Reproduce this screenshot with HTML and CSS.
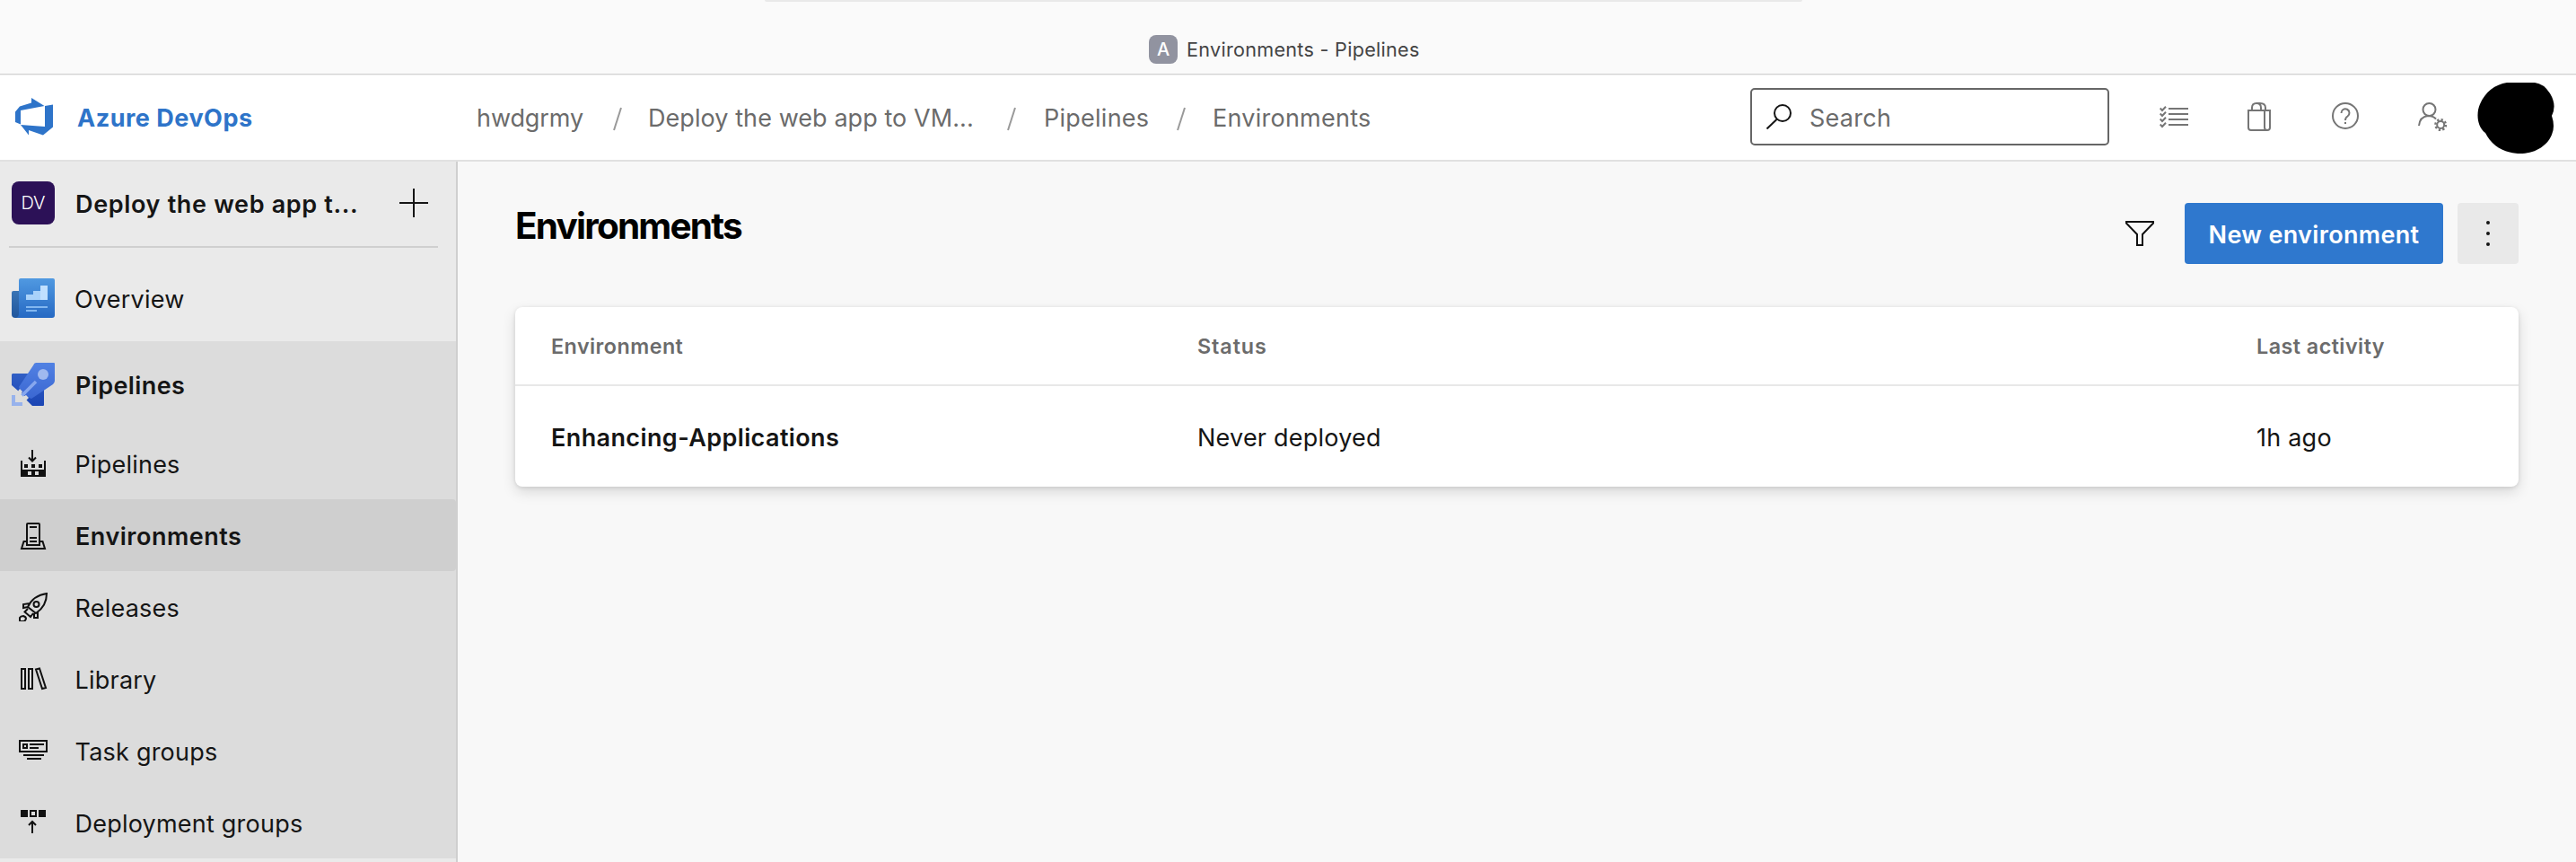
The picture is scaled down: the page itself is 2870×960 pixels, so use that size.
FILE: index.html
```html
<!DOCTYPE html>
<html lang="en">
<head>
<meta charset="utf-8">
<title>Environments - Pipelines</title>
<link rel="stylesheet" href="styles.css">
</head>
<body>
<div class="tabbar">
  <div class="tab-edge"></div>
  <span class="favicon">A</span><span class="tab-title">Environments - Pipelines</span>
</div>
<header class="header">
  <a class="brand">
    <svg class="logo" viewBox="0 0 42 42"><path fill="#2e74c9" d="M0 15.500 5 9.500 18 5.500V0L32.500 9 6 14V29.500L0 27ZM33 9 42 7.500V32.500L31 41.500 15 36V41.500L6 30 33 32Z"/></svg>
    <span class="brand-name">Azure DevOps</span>
  </a>
  <nav class="crumbs">
    <span class="crumb c1">hwdgrmy</span><svg class="slash s1" viewBox="0 0 10 28"><path d="M9 1 1 26"/></svg>
    <span class="crumb c2">Deploy the web app to VM...</span><svg class="slash s2" viewBox="0 0 10 28"><path d="M9 1 1 26"/></svg>
    <span class="crumb c3">Pipelines</span><svg class="slash s3" viewBox="0 0 10 28"><path d="M9 1 1 26"/></svg>
    <span class="crumb c4">Environments</span>
  </nav>
  <div class="search">
    <svg viewBox="0 0 28 28" class="search-icon"><circle cx="18" cy="10" r="9"/><path d="M12 16.500.500 27.500"/></svg>
    <span class="placeholder">Search</span>
  </div>
  <div class="tools">
    <svg class="tool" viewBox="0 0 32 32"><path d="M10 7H32M10 13H32M10 19H32M10 25H32"/><path d="M.700 6.500 3 9 7 4.700M.700 12.500 3 15 7 10.700M.700 18.500 3 21 7 16.700M.700 24.500 3 27 7 22.700"/></svg>
    <svg class="tool" viewBox="2 0 32 32"><path d="M5 9H29V28Q29 31 26 31H8Q5 31 5 28ZM23 9V28Q23 31 26 31M9 9V6Q9 1 14 1T19 6V9M14 1H18Q24 1 24 6V9"/></svg>
    <svg class="tool" viewBox="1 0 32 32"><circle cx="16" cy="15" r="14"/><path d="M11.500 12A4.500 4.500 0 1 1 18.500 15.500Q16 17 16 20"/><path d="M16 22V24"/></svg>
    <svg class="tool" viewBox="0 0 32 32"><circle cx="12.500" cy="8" r="7"/><path d="M1 26Q2 16 11 15 17 15 20 18.500"/><circle cx="25.200" cy="25" r="4"/><path stroke-dasharray="2.300 2.200" stroke-width="2.400" d="M31 25A5.800 5.800 0 1 1 19.400 25 5.800 5.800 0 1 1 31 25"/></svg>
  </div>
  <svg class="avatar" viewBox="0 0 86 80"><path d="M33 0H64Q74 1 81 12 89 25 83 37 87 49 83 58C77 73 60 80 45 79 29 78 16 70 9 56-1 48-1 33 3 24 9 10 20 2 33 0Z"/></svg>
</header>
<div class="body">
  <aside class="sidebar">
    <div class="project">
      <span class="badge">DV</span>
      <span class="label bold project-name">Deploy the web app t...</span>
      <svg class="plus" viewBox="0 0 32 32"><path d="M16 0V32M0 16H32"/></svg>
    </div>
    <div class="divider"></div>
    <a class="hub">
      <svg class="hub-icon" viewBox="0 0 48 48"><defs><linearGradient id="ov" x2="0" y2="1"><stop stop-color="#5099e1"/><stop offset="1" stop-color="#2669c3"/></linearGradient><linearGradient id="od" x2="0" y2="1"><stop stop-color="#3974b5"/><stop offset="1" stop-color="#20569d"/></linearGradient></defs><path fill="url(#od)" d="M2 16H9V46H4Q0 46 0 42V18Q0 16 2 16Z"/><path fill="url(#ov)" d="M10 2H46Q48 2 48 4V43Q48 46 45 46H5Q8 45 8 41V4Q8 2 10 2Z"/><path fill="#a9d2fa" d="M16 20H24V16H32V26H16Z"/><path fill="#c0e0ff" d="M32 10H40V26H32Z"/><path fill="#82b7f0" d="M16 33H40V35H16ZM16 37H28V39H16Z"/></svg>
      <span class="label">Overview</span>
    </a>
    <div class="section">
      <a class="hub">
        <svg class="hub-icon" viewBox="0 0 48 48"><defs><linearGradient id="pb" x2="0" y2="1"><stop stop-color="#315fc5"/><stop offset="1" stop-color="#1b45b4"/></linearGradient><linearGradient id="pf" x2="0" y2="1"><stop stop-color="#5181e3"/><stop offset="1" stop-color="#3b67d2"/></linearGradient></defs><path fill="url(#pb)" d="M1 12H20L36 28V47Q36 48 35 48H23L16 41 8 32 0 25V13Z"/><path fill="url(#pf)" d="M27 0H47Q48 0 48 1V20Q48 22 46 24L22 40 17 38 10 31 8 27 24 3Q25 0 27 0Z"/><circle cx="35" cy="13" r="6" fill="#a0b9ef"/><path stroke="#87a7ee" stroke-width="3.500" d="M27 21 12 36"/><path fill="#dcdcdc" d="M9 29 12 32 11 34 14 37 16 36 19 39 16 42 10 37 6 33Z"/><path stroke="#87a7ee" stroke-width="3.500" d="M15 33 11.500 36.500"/><path fill="#97b2ec" d="M0 36H4V44H12V48H0Z"/></svg>
        <span class="label bold">Pipelines</span>
      </a>
      <a class="item">
        <svg class="item-icon" viewBox="0 0 32 32"><path fill="#111" fill-rule="evenodd" d="M2 13H4V23H28V13H30V31H2ZM10 25V29H14V25ZM18 25V29H22V25Z"/><path fill="#111" d="M6 17H10V21H6ZM14 17H18V21H14ZM22 17H26V21H22Z"/><path class="st" d="M15 1V13M11 9.500 15 13.500 19 9.500"/></svg>
        <span class="label">Pipelines</span>
      </a>
      <a class="item active">
        <svg class="item-icon" viewBox="0 0 32 32"><path class="st" d="M9 27V4Q9 3 10 3H22Q23 3 23 4V27ZM12 7H20M12 19H20M12 23H20M9 23H5.500L3 31H29L26.500 23H23"/></svg>
        <span class="label bold wide">Environments</span>
      </a>
      <a class="item">
        <svg class="item-icon" viewBox="0 0 32 32"><path class="st" d="M10 16Q16 3 31 1 31 15 19 23ZM12 12 5 13V17L10 16M21 21V28H17L17 23M10 18 6.500 21.500 13 27 16 23"/><circle class="st" cx="19.500" cy="13" r="3"/><path class="st" d="M1 32V28Q2 26 5 26 8 27 8 29 7 32 5 32Z"/></svg>
        <span class="label">Releases</span>
      </a>
      <a class="item">
        <svg class="item-icon" viewBox="0 0 32 32"><path class="st" d="M3 5H7V27H3ZM11 5H15V27H11ZM19 5.500 23 4.500 30 26 26 27Z"/></svg>
        <span class="label">Library</span>
      </a>
      <a class="item">
        <svg class="item-icon" viewBox="0 0 32 32"><path class="st" d="M1 5H31V17H1ZM5 9H9V13H5ZM12 9H28M12 13H22M5 21H28M9 25H25"/></svg>
        <span class="label">Task groups</span>
      </a>
      <a class="item">
        <svg class="item-icon" viewBox="0 0 32 32"><path fill="#111" d="M2 2H10V10H2ZM22 2H30V10H22Z"/><path class="st" d="M13 3H19V9H13ZM15 28V15.500M11 19 15 15 19 19"/></svg>
        <span class="label">Deployment groups</span>
      </a>
    </div>
  </aside>
  <main class="main">
    <div class="title-row">
      <h1 class="title">Environments</h1>
      <div class="actions">
        <svg class="filter" viewBox="0 0 32 32"><path d="M1 3H31V4.500L19 17V29H13V17L1 4.500Z"/></svg>
        <button class="primary">New environment</button>
        <button class="more"><svg viewBox="0 0 4 28"><circle cx="2" cy="2" r="2"/><circle cx="2" cy="14" r="2"/><circle cx="2" cy="26" r="2"/></svg></button>
      </div>
    </div>
    <section class="card">
      <div class="row head">
        <span>Environment</span><span class="status-head">Status</span><span>Last activity</span>
      </div>
      <div class="row data">
        <span class="bold">Enhancing-Applications</span><span>Never deployed</span><span>1h ago</span>
      </div>
    </section>
  </main>
</div>
</body>
</html>
```
FILE: styles.css
```css
* { box-sizing: border-box; }
body { margin: 0; width: 2870px; height: 960px; overflow: hidden; font-family: Inter, "Liberation Sans", sans-serif; font-size: 27px; color: #151515; background: #f8f8f8; display: flex; flex-direction: column; }
.tabbar { position: relative; height: 84px; background: #fafafa; border-bottom: 1px solid #efefef; box-shadow: inset 0 -1px #d2d2d2; display: flex; align-items: center; padding: 26px 0 0 1280px; gap: 10px; flex: none; }
.tab-edge { position: absolute; top: 0; left: 852px; width: 1156px; height: 2px; border-radius: 0 0 4px 4px; background: #e9e9e9; }
.favicon { width: 32px; height: 32px; border-radius: 8px; background: #9193a0; color: #fff; font-size: 20px; font-weight: 500; display: flex; align-items: center; justify-content: center; }
.tab-title { font-size: 21.600px; letter-spacing: .28px; color: #444; }
.header { height: 96px; padding-bottom: 2px; background: #fff; border-bottom: 2px solid #e1e1e1; display: flex; align-items: center; flex: none; color: #6b6b6b; }
.brand { width: 531px; display: flex; align-items: center; padding-left: 17px; gap: 27px; flex: none; }
.logo { width: 42px; height: 42px; }
.brand-name { color: #2e74c9; font-weight: 700; letter-spacing: .51px; padding-top: 2px; }
.crumbs { width: 1419px; display: flex; align-items: center; flex: none; }
.crumb { white-space: nowrap; flex: none; padding-top: 2px; letter-spacing: .25px; }
.c1 { width: 152px; letter-spacing: -.08px; } .c2 { width: 400px; letter-spacing: .07px; } .c3 { width: 148px; }
.slash { width: 10px; height: 28px; margin-top: 6px; fill: none; stroke: #999; stroke-width: 2; flex: none; }
.s1 { margin-right: 29px; } .s2 { margin-right: 31px; } .s3 { margin-right: 30px; }
.search { width: 400px; height: 64px; border: 2px solid #666; border-radius: 5px; display: flex; align-items: center; padding-left: 16px; gap: 20px; flex: none; }
.search-icon { width: 28px; height: 28px; fill: none; stroke: #151515; stroke-width: 2; }
.placeholder { padding-top: 2px; letter-spacing: .27px; }
.tools { display: flex; gap: 64px; margin-left: 56px; }
.tool { width: 32px; height: 32px; fill: none; stroke: #757575; stroke-width: 2; }
.avatar { width: 86px; height: 80px; margin: 4px 0 0 34px; fill: #000; }
.body { display: flex; flex: 1; }
.sidebar { width: 510px; border-right: 2px solid #cfcfcf; background: #eaeaea; flex: none; }
.project { height: 92px; display: flex; align-items: center; padding-left: 13px; }
.badge { width: 48px; height: 48px; border-radius: 8px; background: #2c1157; color: #fff; font-size: 20px; font-weight: 300; display: flex; align-items: center; justify-content: center; }
.label { margin-left: 22px; padding-top: 3px; white-space: nowrap; letter-spacing: .22px; }
.bold { font-weight: 600; letter-spacing: .39px; }
.label.bold { margin-left: 23px; }
.label.wide { letter-spacing: .5px; }
.project-name { letter-spacing: .66px; }
.plus { width: 32px; height: 32px; stroke: #151515; stroke-width: 2; margin-left: auto; margin-right: 31px; }
.divider { height: 2px; margin: 2px 20px 8px 10px; background: #cfcfcf; }
.hub { height: 96px; display: flex; align-items: center; padding-left: 13px; }
.hub-icon { width: 48px; height: 48px; }
.section { background: #dcdcdc; }
.item { height: 80px; display: flex; align-items: center; padding-left: 21px; }
.item.active { background: #cfcfcf; border-radius: 0 4px 4px 0; }
.item-icon { width: 32px; height: 32px; }
.item .label { margin-left: 30.500px; }
.item .label.bold { margin-left: 31px; }
.st { fill: none; stroke: #111; stroke-width: 2; }
.main { flex: 1; padding: 46px 64px 0; }
.title-row { display: flex; justify-content: space-between; height: 116px; }
.title { margin: 0; font-size: 40.500px; line-height: 52px; font-weight: 700; letter-spacing: -1.800px; color: #000; }
.actions { display: flex; height: 68px; }
.filter { width: 32px; height: 32px; margin: 18px 34px 0 0; fill: none; stroke: #111; stroke-width: 2; }
button { border: 0; font: inherit; padding: 0; }
.primary { width: 288px; height: 68px; padding-top: 2px; border-radius: 4px; background: #2f78ce; color: #fff; font-weight: 600; letter-spacing: .33px; margin-right: 16px; }
.more { width: 68px; height: 68px; border-radius: 4px; background: #e9e9e9; display: flex; align-items: center; justify-content: center; }
.more svg { width: 4px; height: 28px; fill: #151515; }
.card { background: #fff; border-radius: 8px; height: 200px; box-shadow: 0 6px 15px rgba(0,0,0,.13), 0 1px 4px rgba(0,0,0,.11); }
.row { display: grid; grid-template-columns: 720px 1180px 1fr; align-items: center; padding-left: 40px; }
.head { height: 88px; border-bottom: 2px solid #e8e8e8; font-size: 23.300px; font-weight: 600; letter-spacing: .47px; color: #6b6b6b; }
.status-head { letter-spacing: .93px; }
.data { height: 112px; padding-top: 2px; letter-spacing: .23px; }
```
